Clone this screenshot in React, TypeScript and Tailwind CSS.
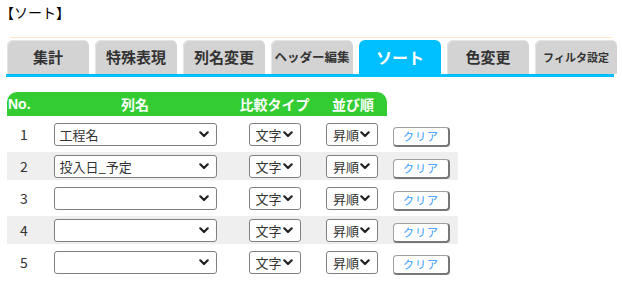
import React from "react";

const tabs = [
  { label: "集計", cls: "text-[15px]" },
  { label: "特殊表現", cls: "text-[15px]" },
  { label: "列名変更", cls: "text-[15px]" },
  { label: "ヘッダー編集", cls: "text-[12.5px]" },
  { label: "ソート", cls: "text-[16px]", active: true },
  { label: "色変更", cls: "text-[15px]" },
  { label: "フィルタ設定", cls: "text-[11px]" },
];

const rows = [
  { no: "1", col: "工程名" },
  { no: "2", col: "投入日_予定" },
  { no: "3", col: "" },
  { no: "4", col: "" },
  { no: "5", col: "" },
];

function Chevron() {
  return (
    <svg width="10" height="7" viewBox="0 0 10 7" className="shrink-0">
      <path d="M1.3 1.3 L5 5 L8.7 1.3" fill="none" stroke="#222" strokeWidth="2.2" strokeLinecap="round" strokeLinejoin="round" />
    </svg>
  );
}

function FakeSelect({ value, width, padCls = "pl-[5px]" }: { value: string; width: string; padCls?: string }) {
  return (
    <div
      role="combobox"
      className={`${width} h-[23px] bg-white border border-[#808080] rounded-[3px] ${padCls} pr-[7px] flex items-center justify-between text-[13px] leading-none text-[#333] whitespace-nowrap`}
    >
      <span>{value}</span>
      <Chevron />
    </div>
  );
}

export default function App() {
  return (
    <div className="w-[622px] h-[283px] bg-white overflow-hidden font-['Noto_Sans_CJK_JP','Noto_Sans',sans-serif] text-[#333]">
      <div className="h-[37px] pt-[2px] text-[14px] leading-[20px] text-black">【ソート】</div>

      <div className="ml-[7px] w-[610px]">
        <div className="h-[1px] bg-[#fde7c8] ml-[3px] w-[602px]" />
        <div className="flex gap-[6px] pt-[2px]">
          {tabs.map((t) => (
            <div
              key={t.label}
              className={`w-[82px] h-[34px] rounded-t-[6px] flex items-center justify-center font-bold whitespace-nowrap ${t.cls} ${
                t.active ? "bg-[#00bfff] text-white" : "bg-[#d3d3d3] text-[#333] shadow-[inset_1px_1px_0_#e4e4e4]"
              }`}
            >
              {t.label}
            </div>
          ))}
        </div>
        <div className="h-[3px] bg-[#00bfff] w-[608px] -ml-[1px]" />
      </div>

      <div className="ml-[7px] mt-[15px] w-[451px] flex flex-col gap-[4px]">
        <div className="w-[380px] h-[24px] bg-[#33cc33] rounded-t-[10px] flex items-center text-white font-bold text-[14px] leading-none">
          <div className="w-[40px] pl-[1px] font-['Liberation_Sans',sans-serif] font-bold">No.</div>
          <div className="w-[176px] text-center">列名</div>
          <div className="w-[103px] text-center">比較タイプ</div>
          <div className="w-[61px] pl-[6px]">並び順</div>
        </div>
        {rows.map((r, i) => (
          <div key={r.no} className={`h-[28px] flex items-center ${i % 2 === 1 ? "bg-[#efefef]" : "bg-white"}`}>
            <div className="w-[40px] pl-[13px] text-[14px] text-[#333]">{r.no}</div>
            <div className="w-[176px] flex justify-center">
              <FakeSelect value={r.col} width="w-[163px]" />
            </div>
            <div className="w-[103px] flex justify-center">
              <FakeSelect value="文字" width="w-[52px]" padCls="pl-[6px]" />
            </div>
            <div className="w-[61px]">
              <FakeSelect value="昇順" width="w-[52px]" padCls="pl-[6px]" />
            </div>
            <div className="w-[71px] pl-[6px]">
              <button className="w-[57px] h-[20px] bg-white border border-[#a0a0a0] border-b-[2px] border-r-[2px] border-b-[#777] border-r-[#777] rounded-[4px] text-[11px] leading-none text-[#3399ff] tracking-[1px]">
                クリア
              </button>
            </div>
          </div>
        ))}
      </div>
    </div>
  );
}
